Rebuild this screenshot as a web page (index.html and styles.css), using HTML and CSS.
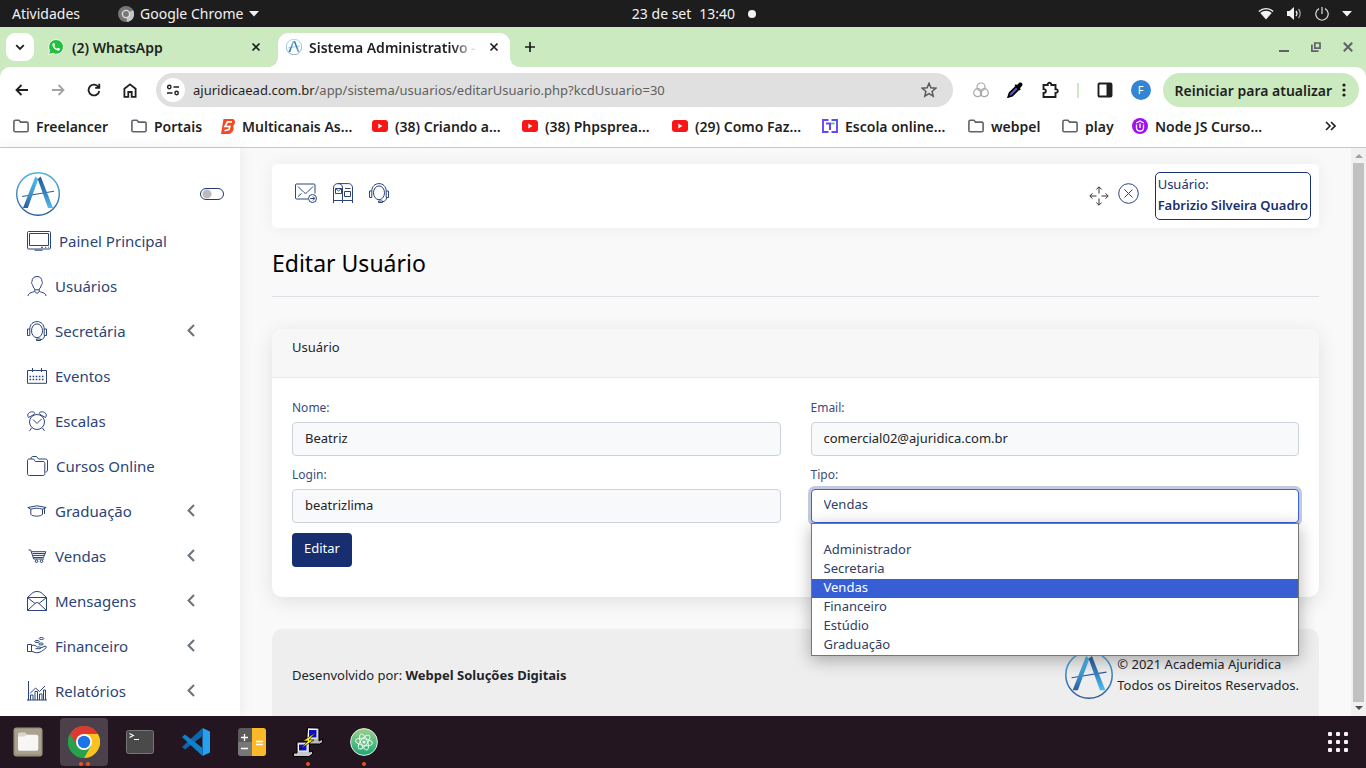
FILE: index.html
```html
<!DOCTYPE html>
<html lang="pt-BR">
<head>
<meta charset="utf-8">
<meta name="viewport" content="width=device-width, initial-scale=1">
<title>Sistema Administrativo</title>
<link rel="stylesheet" href="styles.css">
</head>
<body>
<svg class="defs" width="0" height="0" aria-hidden="true">
  <defs>
    <linearGradient id="ring" x1="0" y1="0" x2="0" y2="1"><stop offset="0" stop-color="#4fb4e6"/><stop offset="1" stop-color="#2d5a9e"/></linearGradient>
    <linearGradient id="legL" x1="0" y1="0" x2="0" y2="1"><stop offset="0" stop-color="#4fbdee"/><stop offset=".5" stop-color="#3f9bd2"/><stop offset="1" stop-color="#2c5b9d"/></linearGradient>
    <linearGradient id="legR" x1="0" y1="0" x2="0" y2="1"><stop offset="0" stop-color="#2c5b9d"/><stop offset=".5" stop-color="#3480bd"/><stop offset="1" stop-color="#4fbdee"/></linearGradient>
    <linearGradient id="atomG" x1="0" y1="0" x2="0" y2="1"><stop offset="0" stop-color="#9bd08a"/><stop offset="1" stop-color="#18a877"/></linearGradient>
  </defs>
  <symbol id="logo" viewBox="0 0 44 44">
    <circle cx="22" cy="22" r="21.3" fill="none" stroke="url(#ring)" stroke-width="1.4"/>
    <path d="M6 24.500 38 19.300" stroke="#2c5b9d" stroke-width="1.1"/>
    <path d="M19.300 4.600 22.300 7 11.800 36H7z" fill="url(#legL)"/>
    <path d="M21.700 7 24.700 4.600 37 36h-5z" fill="url(#legR)"/>
  </symbol>
  <symbol id="folder" viewBox="0 0 16 14"><path d="M2.500 1.200h3.400l1.700 1.900h6.200c.8 0 1.300.5 1.300 1.200v7.200c0 .8-.5 1.300-1.300 1.300H2.200c-.8 0-1.300-.5-1.300-1.300v-9c0-.8.6-1.300 1.600-1.300z" fill="none" stroke="#5f6368" stroke-width="1.600"/></symbol>
  <symbol id="youtube" viewBox="0 0 16 12"><rect width="16" height="12" rx="3" fill="#f91616"/><path d="M6.300 3.600v4.800L10.400 6z" fill="#fff"/></symbol>
  <symbol id="close" viewBox="0 0 10 10"><path d="m1.500 1.500 7 7m0-7-7 7" stroke="currentColor" stroke-width="1.700" fill="none"/></symbol>
  <symbol id="chevron" viewBox="0 0 8 13"><path d="M7 1 1.600 6.500 7 12" fill="none" stroke="#6c757d" stroke-width="2.100"/></symbol>
  <symbol id="headset" viewBox="0 0 20 20"><ellipse cx="10" cy="9.800" rx="5.500" ry="6.900"/><path d="M2.800 8C2.800 3.500 6 .6 10 .6S17.200 3.500 17.200 8M.5 8h2.300v6.500H.5zM17.200 8h2.300v6.500h-2.300zM17.500 14.500c0 2.500-1.500 4-4 4.200M9.500 18h4v1.500h-4z"/></symbol>
</svg>

<header class="system-bar">
  <div class="system-left">
    <span>Atividades</span>
    <span class="app-name">
      <svg width="16" height="16" viewBox="0 0 16 16"><circle cx="8" cy="8" r="8" fill="#767676"/><path d="M8 8 15 4a8 8 0 0 1-6 12z" fill="#c4c4c4"/><circle cx="8" cy="8" r="4.300" fill="#ddd"/><circle cx="8" cy="8" r="2.900" fill="#777"/></svg>
      Google Chrome
      <svg width="10" height="6" viewBox="0 0 10 6"><path d="M0 0h10L5 5.500z" fill="#f2f2f2"/></svg>
    </span>
  </div>
  <div class="system-clock"><span>23 de set</span><span>13:40</span><i class="notice-dot"></i></div>
  <div class="system-status">
    <svg width="16" height="13" viewBox="0 0 16 13"><path d="M.8 4.500C5 .7 11 .7 15.200 4.500" fill="none" stroke="#f2f2f2" stroke-width="1.300"/><path d="M2.300 6c3.500-3 8-3 11.400 0L8 12.600z" fill="#f2f2f2"/></svg>
    <svg width="15" height="13" viewBox="0 0 15 13"><path d="M0 4h2.500L7 0v13L2.500 9H0z" fill="#f2f2f2"/><path d="M9 4c1.200 1.500 1.200 3.500 0 5" fill="none" stroke="#f2f2f2" stroke-width="1.300"/><path d="M11.500 2c2.200 2.500 2.200 6.500 0 9" fill="none" stroke="#aaa" stroke-width="1.200"/></svg>
    <svg width="14" height="14" viewBox="0 0 14 14"><path d="M4 1.600a6.200 6.200 0 1 0 6 0M7 0v7" fill="none" stroke="#ddd" stroke-width="1.200"/></svg>
    <svg width="10" height="6" viewBox="0 0 10 6"><path d="M0 0h10L5 5.500z" fill="#f2f2f2"/></svg>
  </div>
</header>

<div class="tab-strip">
  <button class="tab-search" aria-label="Pesquisar guias"><svg width="10" height="7" viewBox="0 0 10 7"><path d="m1.200 1.200 3.800 3.800 3.800-3.800" fill="none" stroke="#1f1f1f" stroke-width="1.800"/></svg></button>
  <div class="tab">
    <svg width="16" height="16" viewBox="0 0 16 16"><path d="M8 .5a7.400 7.400 0 0 0-6.400 11L.5 15.500l4.100-1.100A7.400 7.400 0 1 0 8 .5z" fill="#22c03d" stroke="#fff" stroke-width=".9"/><path d="M5.500 4c-.9.500-1.400 1.300-1 2.600.8 2.500 2.500 4.200 5 5 1.300.3 2.200-.3 2.500-1.400v-.5L10 8.700l-1 1C7.800 9.300 6.900 8.300 6.400 7.200l.7-1L6.300 4z" fill="#fff"/></svg>
    <span class="tab-title">(2) WhatsApp</span>
    <button class="icon-button" aria-label="Fechar guia"><svg width="10" height="10"><use href="#close"/></svg></button>
  </div>
  <div class="tab tab-active">
    <svg width="16" height="16"><use href="#logo"/></svg>
    <span class="tab-title tab-fade">Sistema Administrativo -</span>
    <button class="icon-button" aria-label="Fechar guia"><svg width="10" height="10"><use href="#close"/></svg></button>
  </div>
  <button class="icon-button new-tab" aria-label="Nova guia"><svg width="12" height="12" viewBox="0 0 12 12"><path d="M6 1v10M1 6h10" stroke="#1f1f1f" stroke-width="1.700"/></svg></button>
  <div class="window-buttons">
    <button class="icon-button" aria-label="Minimizar"><svg width="10" height="10" viewBox="0 0 10 10"><path d="M0 9h10" stroke="#5f6368" stroke-width="2"/></svg></button>
    <button class="icon-button" aria-label="Restaurar"><svg width="10" height="10" viewBox="0 0 10 10"><path d="M3.800 1h5.200v5.200H3.800zM.9 2.500v6.600h6.600" fill="none" stroke="#5f6368" stroke-width="1.700"/></svg></button>
    <button class="icon-button" aria-label="Fechar"><svg width="12" height="12"><use href="#close"/></svg></button>
  </div>
</div>

<div class="toolbar-wrap">
  <div class="toolbar">
    <div class="nav-buttons">
      <button class="icon-button" aria-label="Voltar"><svg width="14" height="12" viewBox="0 0 14 12"><path d="M6.500 1 1.500 6l5 5M1.500 6H13" fill="none" stroke="#1f1f1f" stroke-width="1.800"/></svg></button>
      <button class="icon-button" aria-label="Avançar"><svg width="14" height="12" viewBox="0 0 14 12"><path d="m7.500 1 5 5-5 5M12.500 6H1" fill="none" stroke="#a3a3a3" stroke-width="1.800"/></svg></button>
      <button class="icon-button" aria-label="Recarregar"><svg width="14" height="14" viewBox="0 0 14 14"><path d="M11.600 4.200A5.400 5.400 0 1 0 12.300 8M12.300.8v4.100H8.200" fill="none" stroke="#1f1f1f" stroke-width="1.800"/></svg></button>
      <button class="icon-button" aria-label="Página inicial"><svg width="14" height="15" viewBox="0 0 14 15"><path d="M1.400 5.800 7 1.300l5.600 4.500v8.100H8.700V9H5.300v4.900H1.400z" fill="none" stroke="#1f1f1f" stroke-width="1.800"/></svg></button>
    </div>
    <div class="omnibox">
      <span class="site-info"><svg width="14" height="12" viewBox="0 0 14 12"><path d="M7.500 3H13M1 9h5.500" stroke="#1f1f1f" stroke-width="1.600"/><circle cx="3.300" cy="3" r="1.700" fill="none" stroke="#1f1f1f" stroke-width="1.400"/><circle cx="10.600" cy="9" r="1.700" fill="none" stroke="#1f1f1f" stroke-width="1.400"/></svg></span>
      <span class="url"><b>ajuridicaead.com.br</b>/app/sistema/usuarios/editarUsuario.php?kcdUsuario=30</span>
      <svg width="16" height="16" viewBox="0 0 16 16"><path d="m8 1.300 1.900 4.500 4.900.4-3.700 3.200 1.100 4.800L8 11.600l-4.200 2.600 1.100-4.800L1.200 6.200l4.900-.4z" fill="none" stroke="#5a5a5a" stroke-width="1.500"/></svg>
    </div>
    <div class="extensions">
      <svg width="16" height="16" viewBox="0 0 16 16" fill="none" stroke="#a9a9a9" stroke-width="1.200"><circle cx="8" cy="5" r="4"/><circle cx="4.700" cy="10.700" r="4"/><circle cx="11.300" cy="10.700" r="4"/></svg>
      <svg width="16" height="16" viewBox="0 0 16 16"><path d="M9 4.500 2.500 11l-1.300 4 4-1.300 6.500-6.400z" fill="#5a55c8" stroke="#000" stroke-width="1.700"/><path d="m7.500 3.500 5 5 1.300-1.300-.9-1 2.300-2.500c1-2.300-1-4-3-2.900L10 3 8.800 2.200z" fill="#000"/></svg>
      <svg width="18" height="18" viewBox="0 0 18 18"><path d="M2.500 4h4.200c-.4-3 4-3 3.700 0h4.100v4.200c3-.4 3 4 0 3.700V16h-12v-4c3.200 0 3.200-3.900 0-3.900z" fill="none" stroke="#1f1f1f" stroke-width="1.900"/></svg>
      <i class="divider"></i>
      <svg width="16" height="16" viewBox="0 0 16 16"><rect x="1.500" y="1.500" width="13" height="13" rx="1" fill="none" stroke="#1f1f1f" stroke-width="1.900"/><path d="M9.500 1h5v14h-5z" fill="#1f1f1f"/></svg>
      <span class="avatar">F</span>
    </div>
    <button class="update-button">Reiniciar para atualizar <svg width="4" height="14" viewBox="0 0 4 14" fill="#1f1f1f"><circle cx="2" cy="2" r="1.600"/><circle cx="2" cy="7" r="1.600"/><circle cx="2" cy="12" r="1.600"/></svg></button>
  </div>
  <nav class="bookmarks" aria-label="Favoritos">
    <a href="#"><svg width="16" height="14"><use href="#folder"/></svg>Freelancer</a>
    <a href="#"><svg width="16" height="14"><use href="#folder"/></svg>Portais</a>
    <a href="#"><svg width="14" height="15" viewBox="0 0 14 15"><path d="M2.500 0h9C15 .5 14.500 5 12 7c2 3-1 7.500-4.500 8H0z" fill="#f4481e"/><path d="M11 2.800H6.500L4 7.500h4M9 6.500 8 10.500l-4.500 1.300" fill="none" stroke="#fff" stroke-width="1.700"/></svg>Multicanais As…</a>
    <a href="#"><svg width="16" height="12"><use href="#youtube"/></svg>(38) Criando a…</a>
    <a href="#"><svg width="16" height="12"><use href="#youtube"/></svg>(38) Phpsprea…</a>
    <a href="#"><svg width="16" height="12"><use href="#youtube"/></svg>(29) Como Faz…</a>
    <a href="#"><svg width="16" height="14" viewBox="0 0 16 14"><path d="M6.500 1H1v12h5.500M9.500 1H15v12H9.500M4 4.500h5" fill="none" stroke="#6149f5" stroke-width="1.900"/><path d="M8 4v7" stroke="#6149f5" stroke-width="2"/><path d="M9 4.500h3.500" stroke="#3fd47a" stroke-width="1.900"/></svg>Escola online…</a>
    <a href="#"><svg width="16" height="14"><use href="#folder"/></svg>webpel</a>
    <a href="#"><svg width="16" height="14"><use href="#folder"/></svg>play</a>
    <a href="#"><svg width="16" height="16" viewBox="0 0 16 16"><circle cx="8" cy="8" r="8" fill="#a10ff0"/><path d="M4.500 6.500V10c0 4 7 4 7 0V6.500M4.300 5l3.700-2 3.700 2M8 5.500v4.500" fill="none" stroke="#fff" stroke-width="1.300"/></svg>Node JS Curso…</a>
    <button class="icon-button more" aria-label="Mais favoritos"><svg width="11" height="10" viewBox="0 0 11 10"><path d="m1 1 4 4-4 4m5-8 4 4-4 4" fill="none" stroke="#1f1f1f" stroke-width="1.600"/></svg></button>
  </nav>
</div>

<div class="page">
  <aside class="sidebar">
    <div class="brand">
      <svg width="44" height="44"><use href="#logo"/></svg>
      <label class="switch"><input type="checkbox" aria-label="Recolher menu"></label>
    </div>
    <nav class="menu" aria-label="Menu principal">
      <a href="#"><svg width="24" height="20" viewBox="0 0 24 20"><path d="M1.500.5h21c.6 0 1 .4 1 1v15.500c0 .6-.4 1-1 1h-21c-.6 0-1-.4-1-1V1.500c0-.6.4-1 1-1zM2.500 2.500h19v12h-19zM14 16.300h2M18 16.300h1.200M21 16.300h.8M7.500 19.200h8"/></svg>Painel Principal</a>
      <a href="#"><svg width="20" height="20" viewBox="0 0 20 20"><path d="M10 .5C6.800.5 5 2.500 5 5.500c-1 1 0 3 .6 3.300.5 3 2.300 5.200 4.400 5.200s3.900-2.200 4.400-5.200c.6-.3 1.600-2.300.6-3.300 0-3-1.800-5-5-5zM7.800 13v2.300c-1 1-6.800 1-6.800 4.700M12.200 13v2.300c1 1 6.800 1 6.800 4.700M7.500 15.300 10 17.500l2.500-2.200"/></svg>Usuários</a>
      <a href="#"><svg width="20" height="20"><use href="#headset"/></svg>Secretária<svg class="caret" width="8" height="13"><use href="#chevron"/></svg></a>
      <a href="#"><svg width="20" height="16" viewBox="0 0 20 16"><path d="M.5 2.500h19v12.800H.5zM5.500 0v4M14.500 0v4"/><path d="M2.500 8.500h15M2.500 11.500h15" stroke-width="1.600" stroke-dasharray="1.600 1.500"/></svg>Eventos</a>
      <a href="#"><svg width="20" height="20" viewBox="0 0 20 20"><circle cx="10" cy="11" r="7.500"/><path d="M6 8.500l4 4 4.500-4.500M1.500 6.500C-1 3 3 .5 5.500.8S8 2.500 7 3.500zM18.500 6.500C21 3 17 .5 14.500.8S12 2.500 13 3.500zM4.500 17l-2 3M15.500 17l2 3"/></svg>Escalas</a>
      <a href="#"><svg width="21" height="20" viewBox="0 0 21 20"><path d="M.5 4.500c0-1 .7-1.500 1.500-1.500h4.500l2 2.500H16c1.200 0 1.800.6 1.800 1.800v10.400c0 1.200-.6 1.800-1.800 1.800H2.500c-1.200 0-2-.6-2-1.800zM4 2.800C4 1 5 .5 6 .5h3.500l2 2.500h7c1.300 0 2 .7 2 2v9c0 1.300-.7 2-2 2"/></svg>Cursos Online</a>
      <a href="#"><svg width="20" height="12" viewBox="0 0 20 12"><path d="M.8 2.500 10 .8l9.200 1.700L15.500 4.200c-4-1.300-7.500-1.300-11.700 0zM3.800 4.200v5c1 2.600 10.700 2.600 11.700 0v-5M17.500 3.300V9"/></svg>Graduação<svg class="caret" width="8" height="13"><use href="#chevron"/></svg></a>
      <a href="#"><svg width="20" height="14" viewBox="0 0 20 14"><path d="M1.500 1h2.200l3 9h10.500M4.500 2.700h14.300l-2.300 5.800H6.300M5.500 4.500h12.500M6 6.400h11"/><circle cx="9.500" cy="12.200" r="1.300"/><circle cx="14.500" cy="12.200" r="1.300"/></svg>Vendas<svg class="caret" width="8" height="13"><use href="#chevron"/></svg></a>
      <a href="#"><svg width="20" height="20" viewBox="0 0 20 20"><path d="M.5 6.500h19v13H.5zM.5 6.500 6 1.500c2-1.300 6-1.300 8 0l5.500 5M.5 6.500l7.500 6c1.500-1.300 2.500-1.300 4 0l7.500-6M.5 19.500 8 12.500M19.500 19.500 12 12.500"/></svg>Mensagens<svg class="caret" width="8" height="13"><use href="#chevron"/></svg></a>
      <a href="#"><svg width="20" height="17" viewBox="0 0 20 17"><path d="M.5 7.500h4v7h-4zM4.500 8.500c3-1 4.500.7 6 1.500h2.500c1 0 1 1.700 0 1.700H8.500M13.500 11l4.500-1.800c1.200-.3 2 .8 1 1.600-3 3-6 5-9.500 5-2 0-3-1.300-5-1.500"/><ellipse cx="14.500" cy="1.500" rx="2.300" ry="1"/><ellipse cx="10" cy="4.500" rx="2.300" ry="1"/><ellipse cx="14" cy="7" rx="2.300" ry="1"/></svg>Financeiro<svg class="caret" width="8" height="13"><use href="#chevron"/></svg></a>
      <a href="#"><svg width="20" height="20" viewBox="0 0 20 20"><path d="M1.500 0v19.500M0 19h20M3.500 19v-5h2.500v5M8 19V10.500h2.500V19M12.500 19v-6H15v6M16.500 19V9h2v10M3 12.500 8.500 7l4 3.500L18 5"/></svg>Relatórios<svg class="caret" width="8" height="13"><use href="#chevron"/></svg></a>
    </nav>
  </aside>

  <main class="content">
    <div class="topbar">
      <div class="shortcuts">
        <svg width="22" height="20" viewBox="0 0 22 20"><path d="M13 16H1.500c-.6 0-1-.4-1-1V2c0-.6.4-1 1-1h17.500c.6 0 1 .4 1 1v8.500M3 3.500l6 6c1 1 2 1 3 0l6-6M3 13.500l3.500-3"/><circle cx="17.500" cy="15.500" r="4"/><path d="M15.200 15.500h4.500M17.800 13.500l2 2-2 2"/></svg>
        <svg width="20" height="20" viewBox="0 0 20 20"><path d="M.5 20V5C.5 2 2.500.6 5 .6h10.500c2.500 0 4 1.700 4 4.400v15M5 .6c3 0 4.500 1.400 4.500 4.400v15M.5 17.500h19M2.500 5.500h6v5h-6zM2.500 5.500l3 2.500 3-2.500M11.500 8.500h6v5h-6zM12 5.500h5.500"/></svg>
        <svg width="20" height="20"><use href="#headset"/></svg>
      </div>
      <div class="account">
        <svg class="move" width="20" height="20" viewBox="0 0 20 20"><path d="M10 1v6.500M7.300 3.500 10 .8l2.700 2.700M10 12.500V19M7.300 16.500l2.700 2.700 2.700-2.700M1 10h6.500M3.500 7.300.8 10l2.700 2.700M12.500 10H19M16.500 7.300l2.700 2.700-2.700 2.700"/></svg>
        <svg width="21" height="21" viewBox="0 0 21 21"><circle cx="10.500" cy="10.500" r="9.800"/><path d="m6.500 6.500 8 8m0-8-8 8"/></svg>
        <div class="user-box">Usuário:<br><strong>Fabrizio Silveira Quadro</strong></div>
      </div>
    </div>

    <h1>Editar Usuário</h1>

    <section class="card">
      <h2>Usuário</h2>
      <form class="user-form">
        <div class="field"><label for="nome">Nome:</label><input id="nome" type="text" value="Beatriz"></div>
        <div class="field"><label for="email">Email:</label><input id="email" type="text" value="comercial02@ajuridica.com.br"></div>
        <div class="field"><label for="login">Login:</label><input id="login" type="text" value="beatrizlima"></div>
        <div class="field select-field"><label for="tipo">Tipo:</label>
          <select id="tipo"><option></option><option>Administrador</option><option>Secretaria</option><option selected>Vendas</option><option>Financeiro</option><option>Estúdio</option><option>Graduação</option></select>
          <ul class="options" role="listbox" aria-label="Tipo">
            <li role="option" class="blank"></li>
            <li role="option">Administrador</li>
            <li role="option">Secretaria</li>
            <li role="option" class="selected" aria-selected="true">Vendas</li>
            <li role="option">Financeiro</li>
            <li role="option">Estúdio</li>
            <li role="option">Graduação</li>
          </ul>
        </div>
        <button class="submit" type="button">Editar</button>
      </form>
    </section>

    <footer class="footer">
      <span>Desenvolvido por: <strong>Webpel Soluções Digitais</strong></span>
      <div class="copyright"><svg width="48" height="48"><use href="#logo"/></svg><span>© 2021 Academia Ajuridica<br>Todos os Direitos Reservados.</span></div>
    </footer>
  </main>
  <div class="scrollbar" aria-hidden="true"><i class="arrow-up"></i><i class="thumb"></i><i class="arrow-down"></i></div>
</div>

<footer class="dock">
  <button class="dock-item" aria-label="Arquivos"><svg width="30" height="30" viewBox="0 0 30 30"><rect x=".5" y=".5" width="29" height="29" rx="3" fill="#9b927d"/><rect x="2" y="2" width="26" height="25" rx="2" fill="#aaa290"/><path d="M5 8c0-1.500.7-2.300 2-2.300h5l2 2h9c1.500 0 2.300.8 2.300 2.300v11.500c0 1.500-.8 2.300-2.300 2.300H7c-1.500 0-2-.8-2-2.300z" fill="#f7f6f4"/><path d="M5 8c0-1.500.7-2.300 2-2.300h5l2 2-2.500 1.800H5z" fill="#d9d5cc"/></svg></button>
  <button class="dock-item dock-current" aria-label="Google Chrome"><svg width="32" height="32" viewBox="0 0 32 32"><circle cx="16" cy="16" r="16" fill="#2aa04c"/><path d="M16 16 2.100 8A16 16 0 0 1 29.900 8z" fill="#dc3a30"/><path d="M2.100 8 9 20 16 16V8z" fill="#dc3a30"/><path d="M16 8h13.900A16 16 0 0 1 16 32l7-12z" fill="#fcc31e"/><path d="M2.100 8 9 20l7 4 4-1-4 9A16 16 0 0 1 2.100 8z" fill="#2aa04c"/><circle cx="16" cy="16" r="8" fill="#fff"/><circle cx="16" cy="16" r="6.200" fill="#1a73e8"/></svg><span class="running"><i></i><i></i></span></button>
  <button class="dock-item" aria-label="Terminal"><svg width="28" height="24" viewBox="0 0 28 24"><rect x=".5" y=".5" width="27" height="23" rx="2" fill="#4a4a4a" stroke="#767676"/><path d="m3.500 3.500 3.800 2-3.800 2M8 9.500h5" fill="none" stroke="#fff" stroke-width="1.200"/></svg></button>
  <button class="dock-item" aria-label="Visual Studio Code"><svg width="28" height="28" viewBox="0 0 28 28"><path d="M20.500 0 28 3.500v21L20.500 28z" fill="#27a1ef"/><path d="M20.500 0v8L3 21.500 0 19z" fill="#0c65ad"/><path d="M20.500 28v-8L3 6.500 0 9z" fill="#0f80cc"/></svg></button>
  <button class="dock-item" aria-label="Calculadora"><svg width="28" height="28" viewBox="0 0 28 28"><rect width="28" height="28" rx="3" fill="#5b5b5b"/><path d="M0 14h14v14H3a3 3 0 0 1-3-3z" fill="#777"/><path d="M14 0h11a3 3 0 0 1 3 3v22a3 3 0 0 1-3 3H14z" fill="#fbb829"/><path d="M3 9.500h7M6.500 6v7M3 20.500h7M18 13.500h7M18 16.500h7" stroke="#fff" stroke-width="1.300"/></svg></button>
  <button class="dock-item" aria-label="PuTTY"><svg width="30" height="30" viewBox="0 0 30 30"><path d="M14.500.5 26 1v13l3.500-2v3.500l-3 1.500H13.500v-3z" fill="#b9b9b9" stroke="#000"/><path d="M15.500 2.500h8.500v8.500h-8.500z" fill="#0b0bd8" stroke="#fff"/><path d="M4 15h12.500v10l3-1v3L16 29.500H.5V26H4z" fill="#c9c9c9" stroke="#000"/><path d="M5.500 17h8.500v7H5.500z" fill="#0b0bd8" stroke="#fff"/><path d="M23 5 10 14h5L7 22l14-9h-5z" fill="#ffef1c" stroke="#000" stroke-width=".6"/></svg><span class="running"><i></i></span></button>
  <button class="dock-item" aria-label="Atom"><svg width="28" height="28" viewBox="0 0 28 28"><circle cx="14" cy="14" r="13.400" fill="url(#atomG)" stroke="#e2eee0" stroke-width="1"/><g fill="none" stroke="#e4f7e8" stroke-width="1"><ellipse cx="14" cy="14" rx="8.500" ry="3.400" transform="rotate(10 14 14)"/><ellipse cx="14" cy="14" rx="8.500" ry="3.400" transform="rotate(68 14 14)"/><ellipse cx="14" cy="14" rx="8.500" ry="3.400" transform="rotate(128 14 14)"/></g><circle cx="14" cy="14" r="1.600" fill="#fff"/></svg><span class="running"><i></i></span></button>
  <button class="dock-item apps" aria-label="Mostrar aplicativos"><svg width="20" height="20" viewBox="0 0 20 20" fill="#f4f2f3"><rect width="4" height="4" rx="1"/><rect x="8" width="4" height="4" rx="1"/><rect x="16" width="4" height="4" rx="1"/><rect y="8" width="4" height="4" rx="1"/><rect x="8" y="8" width="4" height="4" rx="1"/><rect x="16" y="8" width="4" height="4" rx="1"/><rect y="16" width="4" height="4" rx="1"/><rect x="8" y="16" width="4" height="4" rx="1"/><rect x="16" y="16" width="4" height="4" rx="1"/></svg></button>
</footer>
</body>
</html>
```
FILE: styles.css
```css
*, *::before, *::after { box-sizing: border-box; }

body {
  margin: 0;
  height: 100vh;
  display: flex;
  flex-direction: column;
  overflow: hidden;
  background: #fff;
  font-family: "Noto Sans", "Open Sans", sans-serif;
  font-size: 14px;
  color: #1f1f1f;
}

svg { flex: none; display: block; }
.defs { position: absolute; }
button, input, select { font: inherit; }
button { border: 0; padding: 0; background: none; color: inherit; }
a { color: inherit; text-decoration: none; }

.icon-button {
  flex: none;
  display: grid;
  place-items: center;
  width: 20px;
  height: 20px;
}

/* System bar */
.system-bar {
  flex: none;
  height: 27px;
  display: grid;
  grid-template-columns: 1fr auto 1fr;
  align-items: center;
  padding: 0 14px 0 12px;
  background: #1d1d1d;
  color: #f2f2f2;
}
.system-left, .app-name, .system-clock, .system-status { display: flex; align-items: center; }
.system-left { gap: 38px; }
.app-name { gap: 6px; }
.system-clock { gap: 8px; padding-left: 24px; }
.notice-dot { width: 8px; height: 8px; margin-left: 5px; border-radius: 50%; background: #f2f2f2; }
.system-status { gap: 13px; justify-content: flex-end; }

/* Tabs */
.tab-strip {
  flex: none;
  height: 40px;
  display: flex;
  align-items: center;
  background: #cbeabf;
  padding: 0 8px 0 6px;
  font-weight: 600;
}
.tab-search {
  width: 28px;
  height: 28px;
  display: grid;
  place-items: center;
  border-radius: 9px;
  background: #fff;
}
.tab {
  position: relative;
  display: flex;
  align-items: center;
  gap: 8px;
  width: 232px;
  height: 34px;
  padding: 0 6px 0 8px;
}
.tab:not(.tab-active) { margin-left: 6px; width: 238px; padding-right: 12px; }
.tab-active {
  align-self: flex-end;
  gap: 7px;
  padding-bottom: 6px;
  border-radius: 10px 10px 0 0;
  background: #fff;
}
.tab-active::before, .tab-active::after {
  content: "";
  position: absolute;
  bottom: 0;
  width: 10px;
  height: 10px;
}
.tab-active::before { right: 100%; background: radial-gradient(circle at 0 0, transparent 10px, #fff 10px); }
.tab-active::after { left: 100%; background: radial-gradient(circle at 100% 0, transparent 10px, #fff 10px); }
.tab-title { flex: 1; white-space: nowrap; }
.tab-fade { mask-image: linear-gradient(to right, #000 85%, transparent); }
.new-tab { margin-left: 10px; }
.window-buttons { margin-left: auto; display: flex; gap: 12px; color: #5f6368; }

/* Toolbar and bookmarks */
.toolbar-wrap {
  flex: none;
  background: linear-gradient(#cbeabf, #cbeabf) top / 100% 10px no-repeat #fff;
  border-bottom: 1px solid #c8cac8;
}
.toolbar {
  height: 46px;
  display: flex;
  align-items: center;
  padding: 0 7px 0 12px;
  border-radius: 10px 10px 0 0;
  background: #fff;
}
.nav-buttons { display: flex; gap: 16px; }
.omnibox {
  flex: 1;
  display: flex;
  align-items: center;
  height: 34px;
  margin-left: 16px;
  padding: 0 16px 0 5px;
  border-radius: 17px;
  background: #e0e0e0;
}
.site-info {
  display: grid;
  place-items: center;
  width: 24px;
  height: 24px;
  border-radius: 50%;
  background: #fff;
}
.url {
  flex: 1;
  margin-left: 8px;
  color: #5f5f5f;
  font-size: 13px;
  white-space: nowrap;
  overflow: hidden;
}
.url b { font-weight: 400; color: #1f1f1f; }
.extensions { display: flex; align-items: center; gap: 18px; padding: 0 12px 0 20px; }
.divider { width: 2px; height: 15px; background: #cbeabf; }
.avatar {
  width: 20px;
  height: 20px;
  border-radius: 50%;
  background: #3484d1;
  color: #fff;
  font-size: 11px;
  line-height: 20px;
  text-align: center;
}
.update-button {
  display: flex;
  align-items: center;
  gap: 10px;
  height: 34px;
  padding: 0 13px 0 12px;
  border-radius: 17px;
  background: #cbeabf;
  font-weight: 600;
  white-space: nowrap;
}
.bookmarks {
  height: 34px;
  display: grid;
  grid-template-columns: 118px 90px 151px 150px 150px 150px 146px 94px 70px auto 1fr;
  align-items: center;
  padding: 0 26px 8px 13px;
  font-weight: 600;
  white-space: nowrap;
}
.bookmarks a { display: flex; align-items: center; gap: 7px; }
.more { justify-self: end; }

/* Page */
.page { flex: 1; min-height: 0; display: flex; background: #f9f9f9; }

.sidebar {
  flex: none;
  width: 240px;
  padding-top: 24px;
  overflow: hidden;
  background: #fff;
  color: #2b4479;
  font-size: 15px;
  box-shadow: 0 0 14px rgba(0, 0, 0, .07);
}
.brand { display: flex; align-items: center; justify-content: space-between; padding: 0 16px; }
.switch { display: flex; }
.switch input {
  appearance: none;
  width: 24px;
  height: 12px;
  margin: 0;
  border: 1px solid #213a75;
  border-radius: 6px;
  background: radial-gradient(circle at 6px 5px, #bbb 4px, transparent 5px);
}
.menu { padding: 2px 0 0 27px; }
.menu a { display: flex; align-items: center; gap: 8px; height: 45px; }
.menu svg, .shortcuts svg, .account svg { fill: none; stroke: #2b4479; stroke-width: 1; }
.menu .caret { margin: 0 45px 0 auto; }

.content {
  flex: 1;
  min-width: 0;
  padding: 16px 32px 0;
  overflow: hidden;
}
.topbar {
  display: flex;
  justify-content: space-between;
  height: 64px;
  padding: 8px 8px 8px 23px;
  border-radius: 5px;
  background: #fff;
  box-shadow: 0 0 16px rgba(0, 0, 0, .06);
}
.shortcuts { display: flex; gap: 16px; padding-top: 11px; }
.account { display: flex; align-items: flex-start; gap: 9px; }
.account svg { margin-top: 11px; }
.account .move { margin-top: 14px; stroke: #333; }
.user-box {
  margin-left: 7px;
  padding: 1px 2px;
  height: 48px;
  border: 1px solid #17306f;
  border-radius: 5px;
  color: #17306f;
  font-size: 13px;
  line-height: 21px;
}
.user-box strong { font-weight: 600; }

h1 {
  margin: 16px 0 32px;
  padding-bottom: 14px;
  border-bottom: 1px solid #dddfe6;
  color: #000;
  font-size: 23px;
  font-weight: 400;
  line-height: 38px;
}

.card {
  border-radius: 10px;
  background: #fff;
  box-shadow: 0 4px 20px rgba(0, 0, 0, .1);
}
.card h2 {
  height: 49px;
  margin: 0;
  padding: 8px 20px;
  border-bottom: 1px solid #ebebeb;
  border-radius: 10px 10px 0 0;
  background: #f7f7f7;
  color: #212529;
  font-size: 13px;
  font-weight: 400;
  line-height: 21px;
}
.user-form {
  display: grid;
  grid-template-columns: 1fr 1fr;
  gap: 10px 30px;
  padding: 21px 20px 30px;
  font-size: 13px;
}
.field { display: flex; flex-direction: column; gap: 5px; min-width: 0; }
.field label { color: #3c4b7c; font-size: 12px; line-height: 18px; }
.field input, .field select {
  width: 100%;
  height: 34px;
  margin: 0;
  padding: 0 12px 2px;
  border: 1px solid #cdd2dc;
  border-radius: 4px;
  background: #f8f9fb;
  color: #212529;
}
.field select {
  appearance: none;
  padding-bottom: 4px;
  border-color: #3c61d8;
  background: #fff;
  color: #2f3e66;
  box-shadow: 0 0 0 3px #c3cadf;
}
.select-field { position: relative; }
.options {
  position: absolute;
  z-index: 2;
  top: 100%;
  left: 0;
  right: 0;
  margin: 0;
  padding: 0;
  border: 1px solid #767676;
  background: #fff;
  color: #2f3e66;
  list-style: none;
  box-shadow: 0 4px 16px rgba(0, 0, 0, .3);
}
.options li { height: 19px; padding: 0 12px; line-height: 17px; }
.options .blank { height: 17px; }
.options .selected { background: #375fd3; color: #fff; }
.submit {
  justify-self: start;
  width: 60px;
  height: 34px;
  padding-bottom: 4px;
  border-radius: 4px;
  background: #172f70;
  color: #fff;
}

.footer {
  display: flex;
  align-items: center;
  justify-content: space-between;
  margin-top: 32px;
  padding: 22px 20px;
  border-radius: 10px 10px 0 0;
  background: #eee;
  color: #212529;
  font-size: 13px;
  line-height: 21px;
}
.copyright { display: flex; align-items: center; gap: 4px; }

.scrollbar {
  flex: none;
  width: 15px;
  display: flex;
  flex-direction: column;
  align-items: center;
  background: #f1f1f1;
}
.scrollbar .thumb { flex: 1; width: 11px; background: #c1c1c1; }
.arrow-up, .arrow-down { border: 4px solid transparent; }
.arrow-up { margin: 2px 0 5px; border-bottom-color: #a3a3a3; }
.arrow-down { margin: 4px 0 2px; border-top-color: #505050; }

/* Dock */
.dock {
  flex: none;
  display: flex;
  align-items: center;
  gap: 8px;
  height: 52px;
  padding: 0 4px;
  background: #241620;
}
.dock-item {
  position: relative;
  display: grid;
  place-items: center;
  width: 48px;
  height: 48px;
  border-radius: 4px;
}
.dock-current { background: #4c404a; }
.running {
  position: absolute;
  inset: auto 0 0;
  display: flex;
  justify-content: center;
  gap: 3px;
}
.running i { width: 4px; height: 4px; border-radius: 50%; background: #e95420; }
.apps { margin-left: auto; }
```
